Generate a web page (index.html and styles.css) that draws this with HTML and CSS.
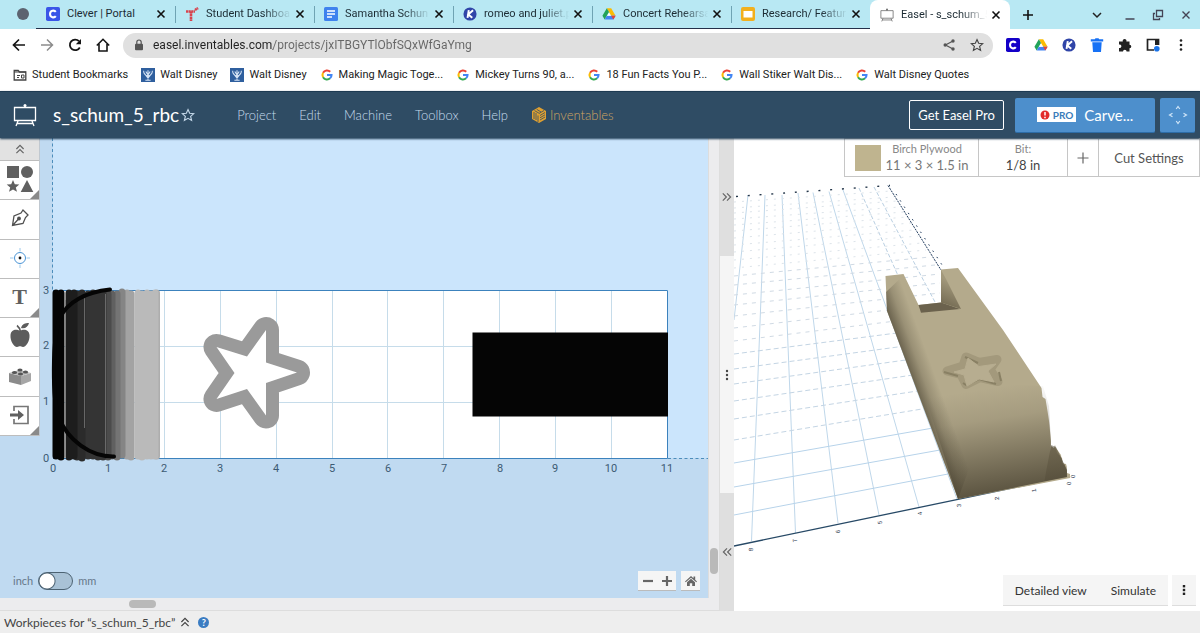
FILE: index.html
```html
<!DOCTYPE html>
<html lang="en">
<head>
<meta charset="utf-8">
<title>Easel - s_schum_5_rbc</title>
<link rel="stylesheet" href="styles.css">
</head>
<body>
<svg class="defs" aria-hidden="true">
  <symbol id="x" viewBox="0 0 10 10"><path d="M1.5 1.5l7 7M8.5 1.5l-7 7" stroke="currentColor" stroke-width="1.6"/></symbol>
  <symbol id="drive" viewBox="0 0 16 16"><path d="M5.500 1.500h5l5 8.500h-5z" fill="#fbbc04"/><path d="M5.500 1.500L.5 10 3 14.300 8 5.800z" fill="#22a35a"/><path d="M3 14.300h10l2.500-4.300h-10z" fill="#4285f4"/><path d="M13 14.300l2.500-4.300h-5z" fill="#ea4335"/><path d="M8 6.500L5.800 10h4.400z" fill="#fff"/></symbol>
  <symbol id="kami" viewBox="0 0 16 16"><circle cx="8" cy="8" r="7.5" fill="#3045a8"/><path d="M6.6 3.5L5.2 12.5M11.5 3.8L6 8.6l4.6 3.8" stroke="#fff" stroke-width="2.2" fill="none"/></symbol>
  <symbol id="clever" viewBox="0 0 16 16"><rect width="16" height="16" rx="2" fill="currentColor"/><path d="M11.2 5.6C9.5 3.2 4.6 3.8 4.6 8s4.9 4.800 6.600 2.400" fill="none" stroke="#fff" stroke-width="2.300"/></symbol>
  <symbol id="google" viewBox="0 0 16 16"><g fill="none" stroke-width="2.300"><path d="M3.500 5.500A5.200 5.200 0 0 1 11.700 4.300" stroke="#ea4335"/><path d="M3.500 10.500A5.200 5.200 0 0 1 3.500 5.500" stroke="#fbbc04"/><path d="M11.500 11.800A5.200 5.200 0 0 1 3.500 10.500" stroke="#34a853"/><path d="M8 8h5.200a5.200 5.200 0 0 1-1.700 3.800" stroke="#4285f4"/></g></symbol>
  <symbol id="disney" viewBox="0 0 16 16"><rect width="16" height="16" fill="#2f5f9e"/><path d="M3 3q0 5 5 6 5-1 5-6M8 2.500V14M5.500 4l2.500 4 2.500-4M5 14h6M4 6.500l4 5 4-5" fill="none" stroke="#d6e4f5" stroke-width="1.200"/></symbol>
  <symbol id="easel" viewBox="0 0 24 24"><path d="M1.500 4.500h21v13h-21zM12 4.500V2M5 18l-2 5M19 18l2 5M4 20.500h16" fill="none" stroke="currentColor" stroke-width="1.300"/><circle cx="12" cy="2.500" r="1.500" fill="currentColor"/></symbol>
  <symbol id="star" viewBox="0 0 16 16"><path d="M8 1.800l1.900 4.300 4.600.4-3.500 3.100 1.100 4.600L8 11.800l-4.100 2.400L5 9.600 1.500 6.500l4.600-.4z" fill="none" stroke="currentColor" stroke-width="1.300"/></symbol>
  <symbol id="chev" viewBox="0 0 10 10"><path d="M2 5l3-3 3 3M2 8.500l3-3 3 3" fill="none" stroke="currentColor" stroke-width="1"/></symbol>
</svg>

<div class="tabstrip">
  <span class="tab-dot"></span>
  <div class="tabs">
    <div class="tab"><svg class="i14 clever-tab"><use href="#clever"/></svg><span class="tab-name">Clever | Portal</span><button class="close" aria-label="Close tab"><svg class="i10"><use href="#x"/></svg></button></div>
    <div class="tab"><svg class="i14" viewBox="0 0 14 14"><path d="M1 4.500h9M6 4.500V14M10 3l3-2" stroke="#d8434e" stroke-width="2.600" stroke-dasharray="2.200 .4" fill="none"/></svg><span class="tab-name fade">Student Dashboa</span><button class="close" aria-label="Close tab"><svg class="i10"><use href="#x"/></svg></button></div>
    <div class="tab"><svg class="i14" viewBox="0 0 14 14"><rect width="14" height="14" rx="1.500" fill="#3f82ee"/><path d="M3 4h8M3 7h8M3 10h5" stroke="#fff" stroke-width="1.400"/></svg><span class="tab-name fade">Samantha Schun</span><button class="close" aria-label="Close tab"><svg class="i10"><use href="#x"/></svg></button></div>
    <div class="tab"><svg class="i14"><use href="#kami"/></svg><span class="tab-name fade">romeo and juliet.p</span><button class="close" aria-label="Close tab"><svg class="i10"><use href="#x"/></svg></button></div>
    <div class="tab"><svg class="i14"><use href="#drive"/></svg><span class="tab-name fade">Concert Rehearsa</span><button class="close" aria-label="Close tab"><svg class="i10"><use href="#x"/></svg></button></div>
    <div class="tab"><svg class="i14" viewBox="0 0 14 14"><rect width="14" height="14" rx="2" fill="#f2b01e"/><rect x="2.500" y="4" width="9" height="6.500" fill="#fff"/></svg><span class="tab-name fade">Research/ Featur</span><button class="close" aria-label="Close tab"><svg class="i10"><use href="#x"/></svg></button></div>
  </div>
  <div class="tab tab-active"><svg class="i14 easel-tab"><use href="#easel"/></svg><span class="tab-name fade">Easel - s_schum_5</span><button class="close" aria-label="Close tab"><svg class="i10"><use href="#x"/></svg></button></div>
  <button class="new-tab" aria-label="New tab"><svg class="i12" viewBox="0 0 12 12"><path d="M6 1v10M1 6h10" stroke="#111" stroke-width="1.600"/></svg></button>
  <div class="window-controls">
    <button aria-label="Search tabs"><svg class="i12" viewBox="0 0 12 12"><path d="M2 4l4 4 4-4" fill="none" stroke="#222" stroke-width="1.500"/></svg></button>
    <button aria-label="Minimize"><svg class="i12" viewBox="0 0 12 12"><path d="M1.500 10h9" stroke="#445" stroke-width="1.500"/></svg></button>
    <button aria-label="Restore"><svg class="i12" viewBox="0 0 12 12"><path d="M4.500 1.500h6v6h-6zM3 4.500H1.500v6h6V9" fill="none" stroke="#445" stroke-width="1.300"/></svg></button>
    <button aria-label="Close"><svg class="i12" viewBox="0 0 12 12"><path d="M2.500 2.500l7 7M9.500 2.500l-7 7" stroke="#445" stroke-width="1.400"/></svg></button>
  </div>
</div>

<div class="navbar">
  <div class="nav-buttons">
    <button aria-label="Back"><svg class="i14" viewBox="0 0 14 14"><path d="M13 7H2M7 1.500L1.500 7 7 12.500" fill="none" stroke="#151515" stroke-width="1.700"/></svg></button>
    <button aria-label="Forward"><svg class="i14" viewBox="0 0 14 14"><path d="M1 7h11M7 1.500L12.500 7 7 12.500" fill="none" stroke="#8c8c8c" stroke-width="1.500"/></svg></button>
    <button aria-label="Reload"><svg class="i14" viewBox="0 0 14 14"><path d="M11.800 9.500A5.300 5.300 0 1 1 11 3.200" fill="none" stroke="#151515" stroke-width="1.800"/><path d="M13 1v5.200H7.800z" fill="#151515"/></svg></button>
    <button aria-label="Home"><svg class="i14" viewBox="0 0 14 14"><path d="M.8 7.500L7 1.300l6.200 6.200M3 6v7h8V6" fill="none" stroke="#151515" stroke-width="1.600"/></svg></button>
  </div>
  <div class="omnibox">
    <svg class="i12" viewBox="0 0 12 12"><rect x="2" y="4.800" width="8" height="6.400" rx="1" fill="#555"/><path d="M3.800 5V3.200a2.200 2.200 0 0 1 4.400 0V5" fill="none" stroke="#555" stroke-width="1.200"/></svg>
    <input class="url" aria-label="Address" value="easel.inventables.com/projects/jxITBGYTlObfSQxWfGaYmg">
    <button aria-label="Share"><svg class="i14" viewBox="0 0 14 14"><path d="M11 3L3.500 7l7.500 4" fill="none" stroke="#555" stroke-width="1.200"/><circle cx="11" cy="3" r="1.700" fill="#555"/><circle cx="3.200" cy="7" r="1.700" fill="#555"/><circle cx="11" cy="11" r="1.700" fill="#555"/></svg></button>
    <button class="bookmark-star" aria-label="Bookmark"><svg class="i14"><use href="#star"/></svg></button>
  </div>
  <div class="extensions">
    <button aria-label="Clever"><svg class="i14 clever-ext"><use href="#clever"/></svg></button>
    <button aria-label="Drive"><svg class="i14"><use href="#drive"/></svg></button>
    <button aria-label="Kami"><svg class="i14"><use href="#kami"/></svg></button>
    <button aria-label="Clear"><svg class="i14" viewBox="0 0 14 14"><path d="M.8 1.200h4L5.500.3h3l.7.9h4v2.300H.800zM2.300 4.300h9.400L11 14H3z" fill="#1671f5"/></svg></button>
    <button aria-label="Extensions"><svg class="i14" viewBox="0 0 14 14"><path d="M1 3.500h3.800a1.900 1.900 0 1 1 3.600 0h3.100v3.200a1.800 1.800 0 1 1 0 3.600v3.200H8.600a1.800 1.800 0 1 0-3.600 0H1V9.900a1.800 1.800 0 1 0 0-3.400z" fill="#222"/></svg></button>
    <button aria-label="Side panel"><svg class="i14" viewBox="0 0 14 14"><path d="M8 12H1.500V1.500h11V7" fill="none" stroke="#222" stroke-width="1.700"/><path d="M9 1h4v6H9z" fill="#222"/><circle cx="10.800" cy="10.800" r="2.800" fill="#1a73e8"/></svg></button>
    <button aria-label="Menu"><svg class="i14" viewBox="0 0 14 14"><g fill="#222"><circle cx="7" cy="2.500" r="1.300"/><circle cx="7" cy="7" r="1.300"/><circle cx="7" cy="11.500" r="1.300"/></g></svg></button>
  </div>
</div>

<nav class="bookmarks">
  <a href="#"><svg class="i14" viewBox="0 0 14 14"><path d="M1.200 2.500h4L6.500 4h6.300v8H1.200z" fill="none" stroke="#444" stroke-width="1.300"/><path d="M1 4h12M4 7.500h3M4 9.500h2M8.500 7h2.500v3H8.500z" stroke="#444" fill="none"/></svg><span>Student Bookmarks</span></a>
  <a href="#"><svg class="i14"><use href="#disney"/></svg><span>Walt Disney</span></a>
  <a href="#"><svg class="i14"><use href="#disney"/></svg><span>Walt Disney</span></a>
  <a href="#"><svg class="i14"><use href="#google"/></svg><span>Making Magic Toge...</span></a>
  <a href="#"><svg class="i14"><use href="#google"/></svg><span>Mickey Turns 90, a...</span></a>
  <a href="#"><svg class="i14"><use href="#google"/></svg><span>18 Fun Facts You P...</span></a>
  <a href="#"><svg class="i14"><use href="#google"/></svg><span>Wall Stiker Walt Dis...</span></a>
  <a href="#"><svg class="i14"><use href="#google"/></svg><span>Walt Disney Quotes</span></a>
</nav>

<header class="app-header">
  <svg class="logo"><use href="#easel"/></svg>
  <h1 class="project-name">s_schum_5_rbc</h1>
  <button class="favorite" aria-label="Favorite"><svg class="i14"><use href="#star"/></svg></button>
  <nav class="menu">
    <a href="#">Project</a><a href="#">Edit</a><a href="#">Machine</a><a href="#">Toolbox</a><a href="#">Help</a>
    <a class="brand" href="#"><svg class="i16" viewBox="0 0 16 16"><path d="M8 0l7 4v8l-7 4-7-4V4z" fill="#e0a030"/><path d="M3 5v7M5 6v7M7 8.500V15M9 8.500l5-3M9 10.800l5-3M9 13l5-3M3.500 3.600L8 6.200M5.700 2.300L10 5M8 6.500l5-3" stroke="#2f4c64" stroke-width=".8"/></svg>Inventables</a>
  </nav>
  <div class="header-actions">
    <button class="get-pro">Get Easel Pro</button>
    <button class="carve"><span class="pro"><svg class="i10" viewBox="0 0 10 10"><circle cx="5" cy="5" r="4.500" fill="#e22b2b"/><path d="M5 2v3.600M5 6.800v1.400" stroke="#fff" stroke-width="1.500"/></svg>PRO</span>Carve...</button>
    <button class="jog" aria-label="Jog machine"><svg class="i20" viewBox="0 0 20 20"><path d="M8.200 4L10 1.500 11.800 4M8.200 16l1.800 2.500 1.800-2.500M4.500 8.200L1.500 10l3 1.800M15.500 8.200l3 1.800-3 1.800" fill="none" stroke="#cfe5f8" stroke-width="1.200"/></svg></button>
  </div>
</header>

<main class="workspace">
  <section class="editor">
    <div class="canvas">
      <svg class="drawing" viewBox="0 138 708 460" preserveAspectRatio="xMinYMin slice">
        <rect x="0" y="138" width="1400" height="900" fill="#c0daf1"/>
        <rect x="53" y="138" width="1400" height="320" fill="#cbe5fc"/>
        <rect x="53" y="290" width="615" height="168" fill="#fff"/>
        <path d="M164.500 291v167M220.500 291v167M276.500 291v167M332.500 291v167M387.500 291v167M443.500 291v167M499.500 291v167M555.500 291v167M611.500 291v167M53 346.500h615M53 402.500h615" stroke="#c6dcea" fill="none"/>
        <path d="M52.500 138v152M668 458.500h40" stroke="#4c8dbb" stroke-dasharray="3 2.500" fill="none"/>
        <path d="M53 290.500h614.500v168H53" stroke="#3c82bd" fill="none"/>
        <g fill="none" stroke-width="7" stroke-linecap="round">
          <path d="M156.500 293v163" stroke="#adadad"/>
          <path d="M138 293v163M142 294v163M147 293v163M151 294v162M155 293v163" stroke="#bababa"/>
          <path d="M127 293v163M131 294v163" stroke="#a3a3a3"/>
          <path d="M122 292v163" stroke="#858585"/>
          <path d="M117 294v163" stroke="#747474"/>
          <path d="M112 294v162" stroke="#606060"/>
          <path d="M108 294v163" stroke="#4b4b4b"/>
          <path d="M88 294v162M93 293v163M98 294v163M103 293v164" stroke="#343434"/>
          <path d="M82 293v165M77 294v163" stroke="#2b2b2b"/>
          <path d="M69 293v164M74 293v163" stroke="#1d1d1d"/>
          <path d="M56 293v163M61 293v164" stroke="#050505"/>
        </g>
        <path d="M65.500 300v130M84.500 294v134M105.500 294v160" stroke="#777" stroke-width=".8"/>
        <path d="M110 289.500C86 292 67 302 60 318 52 338 52 400 59 418 68 440 90 457 114 456.500" fill="none" stroke="#050505" stroke-width="4" stroke-linecap="round"/>
        <path d="M297 372.500L266 383v32.500L247 389l-30.500 10 18-26-18-26L247 356.500l19-26.500v32.500z" fill="#fff" stroke="#9a9a9a" stroke-width="26" stroke-linejoin="round"/>
        <path d="M297 372.500L266 383v32.500L247 389l-30.500 10 18-26-18-26L247 356.500l19-26.500v32.500z" fill="#fff"/>
        <rect x="472.500" y="332.500" width="195.500" height="84" fill="#050505"/>
        <g class="ruler" text-anchor="middle">
          <text x="53" y="472">0</text><text x="108" y="472">1</text><text x="164" y="472">2</text><text x="220" y="472">3</text><text x="276" y="472">4</text><text x="332" y="472">5</text><text x="388" y="472">6</text><text x="444" y="472">7</text><text x="500" y="472">8</text><text x="555" y="472">9</text><text x="611" y="472">10</text><text x="667" y="472">11</text>
          <text x="46" y="294">3</text><text x="46" y="349">2</text><text x="46" y="405">1</text><text x="46" y="462">0</text>
        </g>
      </svg>
      <div class="rail">
        <button class="rail-collapse" aria-label="Collapse tools"><svg class="i12"><use href="#chev"/></svg></button>
        <button class="tool more" aria-label="Shapes"><svg class="i26" viewBox="0 0 26 26"><g fill="#606060"><path d="M0 0h12v12H0zM20 14l6.300 12H13.700zM6 14l1.800 4.200 4.500.3-3.500 2.900 1.200 4.400L6 23.400l-4 2.400 1.200-4.400-3.500-2.900 4.500-.3z"/><circle cx="20" cy="6" r="6"/></g></svg></button>
        <button class="tool" aria-label="Pen"><svg class="i20" viewBox="0 0 20 20"><path d="M2.500 17.500L4 8l7-3 2-3 5 5-2.500 2.500L13 15.500zM3 17l5.500-6" fill="none" stroke="#505050" stroke-width="1.300"/><circle cx="9" cy="10.500" r="1.900" fill="#505050"/></svg></button>
        <button class="tool" aria-label="Drill"><svg class="i20" viewBox="0 0 20 20"><circle cx="10" cy="10" r="5.500" fill="none" stroke="#4b95d6"/><path d="M10 0v3.500M10 16.500V20M0 10h3.500M16.500 10H20" stroke="#9cc8ea"/><circle cx="10" cy="10" r="1.400" fill="#111"/></svg></button>
        <button class="tool more letter">T</button>
        <button class="tool" aria-label="Icons"><svg class="i26" viewBox="0 0 26 26"><path d="M13 8c3-2 9-2 9.500 4S19 24 16 24c-1.500 0-2-.7-3-.7s-1.500.7-3 .7c-3 0-7-6-6.500-12S10 6 13 8z" fill="#5c5c5c"/><path d="M14 5c1-4 4-5 8-5-1 4-4 6-8 5z" fill="#5c5c5c"/><path d="M13.500 9C13 6 12 4 10 2.500" fill="none" stroke="#5c5c5c" stroke-width="1.600"/></svg></button>
        <button class="tool" aria-label="Apps"><svg class="i22" viewBox="0 0 22 22"><path d="M0 8l12 3v9L0 17z" fill="#8b8b8b"/><path d="M12 11l10-3v8l-10 4z" fill="#a6a6a6"/><path d="M0 8l10-3 12 3-10 3z" fill="#bcbcbc"/><g fill="#555"><ellipse cx="5.500" cy="7.500" rx="2.600" ry="1.500"/><ellipse cx="11" cy="5" rx="2.600" ry="1.500"/><ellipse cx="11.500" cy="9" rx="2.600" ry="1.500"/><ellipse cx="16.500" cy="7" rx="2.600" ry="1.500"/></g></svg></button>
        <button class="tool more" aria-label="Import"><svg class="i20" viewBox="0 0 20 20"><path d="M4 6V1.500h14v17H4V14" fill="none" stroke="#777" stroke-width="1.700"/><path d="M0 8.500h8V5l6 5-6 5v-3.500H0z" fill="#606060"/></svg></button>
      </div>
      <div class="units"><label for="unit">inch</label><input id="unit" class="switch" type="checkbox"><label for="unit">mm</label></div>
      <div class="zoom">
        <div class="zoom-pair"><button aria-label="Zoom out"><svg class="i10" viewBox="0 0 10 10"><path d="M0 5h10" stroke="#666" stroke-width="2.200"/></svg></button><button aria-label="Zoom in"><svg class="i10" viewBox="0 0 10 10"><path d="M0 5h10M5 0v10" stroke="#666" stroke-width="2.200"/></svg></button></div>
        <button class="zoom-home" aria-label="Reset view"><svg class="i12" viewBox="0 0 12 12"><path d="M0 6.500L6 1l2.500 2.200V1.500h1.700v3.300L12 6.500l-.7.8L6 2.700.7 7.300zM2 7.300l4-3.500 4 3.500V11H7.200V8.200H4.800V11H2z" fill="#666"/></svg></button>
      </div>
    </div>
    <div class="vscroll"><span class="vthumb"></span></div>
    <div class="hscroll"><span class="hthumb"></span></div>
  </section>

  <div class="splitter">
    <button class="split-end" aria-label="Expand editor"><svg class="i12 right"><use href="#chev"/></svg></button>
    <div class="split-grip"><svg class="i12" viewBox="0 0 12 12"><g fill="#444"><circle cx="6" cy="2" r="1.200"/><circle cx="6" cy="6" r="1.200"/><circle cx="6" cy="10" r="1.200"/></g></svg></div>
    <button class="split-end" aria-label="Expand preview"><svg class="i12 left"><use href="#chev"/></svg></button>
  </div>

  <section class="preview">
    <svg class="drawing" viewBox="734 138 466 473" preserveAspectRatio="xMinYMin slice">
      <defs>
        <linearGradient id="front" x1="990" y1="388" x2="1006" y2="490" gradientUnits="userSpaceOnUse"><stop offset="0" stop-color="#4a4332" stop-opacity="0"/><stop offset=".3" stop-color="#4a4332" stop-opacity=".14"/><stop offset="1" stop-color="#4a4332" stop-opacity=".82"/></linearGradient>
        <linearGradient id="side" x1="921" y1="405" x2="943" y2="397" gradientUnits="userSpaceOnUse"><stop offset="0" stop-color="#4a4332" stop-opacity=".7"/><stop offset=".5" stop-color="#4a4332" stop-opacity=".25"/><stop offset="1" stop-color="#4a4332" stop-opacity="0"/></linearGradient>
        <linearGradient id="wall" x1="941" y1="306" x2="952" y2="282" gradientUnits="userSpaceOnUse"><stop offset="0" stop-color="#716850"/><stop offset="1" stop-color="#a2987b"/></linearGradient>
      </defs>
      <g fill="none">
        <path d="M748 195L734 320M765 195L751.500 541M782 195L795.500 533M798 193L838 523M813 192.500L879 515M829 191.500L919 507M843 190L957 499" stroke="#bfd7ea"/>
        <path d="M859 188L900 280M874 187L935 302" stroke="#b9cfe2" stroke-dasharray="4 2"/>
        <path d="M734 515L948 474M734 487L940 450M734 463L933 428" stroke="#b7d3ea"/>
        <path d="M734 440L928 408M734 419L924 390M734 401L920 374M734 384L920 358M734 369L920 344M734 354L920 330" stroke="#c4d5e4" stroke-dasharray="5 3"/>
        <path d="M734 341L920 318M734 328L940 304M734 316L940 293M734 305L940 283M734 295L940 274M734 285L935 265M734 276L930 257" stroke="#d0dae4" stroke-dasharray="4 5"/>
        <path d="M734 268L926 250M734 260L922 243M734 252L918 236M734 245L914 230M734 238L911 223M734 231L907 217M734 225L904 212M734 219L900 207M734 213L897 201M734 208L894 197M734 202L891 191" stroke="#dde4ea" stroke-dasharray="2 6"/>
        <path d="M736 196.500L890 185.500" stroke="#25374b" stroke-width="1.400" stroke-dasharray="2 9.800"/>
        <path d="M888 185.500L941 270" stroke="#1f3a5c" stroke-dasharray="2 1"/>
        <path d="M896 194L944 268" stroke="#1f3a5c" stroke-dasharray="1.500 6"/>
        <path d="M734 546L1068 476.500" stroke="#274966" stroke-width="1.300"/>
      </g>
      <path d="M885.500 276l18-2 15 31 22.500-2.500v-33l17-1.500 45 62 38.500 58 1 9 3 2 2 12 1.500 10 2 20-1 25 6-18 5 7 1 8 4 1 1 9 3 1v4L958 499 887 311z" fill="#b4aa8c"/>
      <path d="M1046 472l5-26 3 2 1-3 2 8 5 5 1 7 2-1 .5 6 1-6v13l-22 4z" fill="#958b6f"/>
      <path d="M918.500 305l22.500-2.500 19 6.500-39 3.700z" fill="#6b624d"/>
      <path d="M941 270v32.500l20 6.500-15-30z" fill="url(#wall)"/>
      <path d="M925 396l20-14 98 4 6 20 2 39 5 2 11 23v7L958 499z" fill="url(#front)"/>
      <path d="M886 292l1 19 71 188 16-44-70-180z" fill="url(#side)"/>
      <g stroke-linejoin="round">
        <path d="M947 371l16-5 3-9 13 5.500 18-3-7 10 8 12-18-4-14 7-5-10z" fill="#a3997c" stroke="#a3997c" stroke-width="9"/>
        <path d="M965 357l13 6M963 383l3 2 13-6 17 5M999 372l2 9M944 372l14 4" fill="none" stroke="#898064" stroke-width="2"/>
        <path d="M954 372l11-3 3-11 11 8.500 17-2.500-8 7 6 11-15-3-12 7-3-11z" fill="#b7ad90" stroke="#b7ad90"/>
      </g>
      <g class="axis-labels" text-anchor="middle">
        <text transform="translate(753 549) rotate(-100)">8</text><text transform="translate(797 540) rotate(-100)">7</text><text transform="translate(840 531) rotate(-100)">6</text><text transform="translate(882 522) rotate(-100)">5</text><text transform="translate(922 513) rotate(-100)">4</text><text transform="translate(961 505) rotate(-100)">3</text><text transform="translate(999 498) rotate(-100)">2</text><text transform="translate(1036 490) rotate(-100)">1</text><text transform="translate(1071 483) rotate(-100)">0</text><text transform="translate(1075 476) rotate(-100)">0</text>
      </g>
    </svg>
    <div class="settings">
      <button class="material"><span class="swatch"></span><span class="pair"><span class="small">Birch Plywood</span><span class="value">11 × 3 × 1.5 in</span></span></button>
      <button class="bit"><span class="pair"><span class="small">Bit:</span><span class="value dark">1/8 in</span></span></button>
      <button class="add-bit" aria-label="Add bit"><svg class="i12" viewBox="0 0 12 12"><path d="M6 .5v11M.5 6h11" stroke="#666" stroke-width="1.200"/></svg></button>
      <button class="cut">Cut Settings</button>
    </div>
    <div class="view-actions">
      <div class="view-pair"><button>Detailed view</button><button>Simulate</button></div>
      <button class="kebab" aria-label="More"><svg class="i12" viewBox="0 0 12 12"><g fill="#222"><rect x="4.800" y="1" width="2.400" height="2.400"/><rect x="4.800" y="4.800" width="2.400" height="2.400"/><rect x="4.800" y="8.600" width="2.400" height="2.400"/></g></svg></button>
    </div>
  </section>
</main>

<footer class="workpieces">
  <button class="workpieces-toggle">Workpieces for “s_schum_5_rbc” <svg class="i12"><use href="#chev"/></svg></button>
  <button class="help" aria-label="Help">?</button>
</footer>
</body>
</html>
```

FILE: styles.css
```css
* { box-sizing: border-box; }

body {
  margin: 0;
  height: 100vh;
  display: flex;
  flex-direction: column;
  overflow: hidden;
  font-family: Lato, "Liberation Sans", sans-serif;
  background: #fff;
  color: #444;
}

button {
  margin: 0;
  padding: 0;
  border: 0;
  background: none;
  color: inherit;
  font: inherit;
  display: flex;
  align-items: center;
  justify-content: center;
}

a { color: inherit; text-decoration: none; }
svg { display: block; flex: none; }

.defs { position: absolute; width: 0; height: 0; }
.i10 { width: 10px; height: 10px; }
.i12 { width: 12px; height: 12px; }
.i14 { width: 14px; height: 14px; }
.i16 { width: 16px; height: 16px; }
.i20 { width: 20px; height: 20px; }
.i22 { width: 22px; height: 22px; }
.i26 { width: 26px; height: 26px; overflow: visible; }

/* Browser tabs */
.tabstrip {
  flex: none;
  display: flex;
  height: 29px;
  background: #b8e8f3;
  font: 11px/16px Roboto, sans-serif;
  color: #1c2b33;
}
.tab-dot {
  width: 12px;
  height: 12px;
  margin: 8px 7px 0 17px;
  border-radius: 50%;
  background: #5c6370;
}
.tabs {
  display: flex;
  border-bottom: 1px solid #23304a;
}
.tab {
  position: relative;
  display: flex;
  align-items: center;
  width: 139px;
  padding: 0 9px 0 10px;
}
.tabs .tab + .tab::before {
  content: "";
  position: absolute;
  left: 0;
  top: 6px;
  height: 17px;
  border-left: 1px solid #6fa3b3;
}
.tab-name {
  flex: 1;
  min-width: 0;
  margin: 0 0 0 7px;
  white-space: nowrap;
}
.fade { mask-image: linear-gradient(to right, #000 66%, transparent 96%); }
.tab-active {
  width: 140px;
  border-radius: 8px 8px 0 0;
  background: #fff;
}
.close { color: #111; }
.clever-tab { color: #3a55e8; }
.clever-ext { color: #1400c8; }
.easel-tab { color: #666; }
.new-tab { width: 36px; }
.window-controls {
  display: flex;
  gap: 16px;
  margin-left: auto;
  padding-right: 8px;
}
.window-controls button:first-child { margin-right: 5px; }

/* Browser toolbar */
.navbar {
  flex: none;
  display: flex;
  align-items: center;
  height: 32px;
}
.nav-buttons { display: flex; gap: 14px; padding: 0 13px 0 12px; }
.omnibox {
  flex: 1;
  display: flex;
  align-items: center;
  height: 25px;
  padding: 0 9px 0 10px;
  border-radius: 13px;
  background: #e0e0e0;
}
.url {
  flex: 1;
  min-width: 0;
  margin-left: 8px;
  padding: 0;
  border: 0;
  outline: 0;
  font: 12px/20px Roboto, sans-serif;
  color: transparent;
  background: linear-gradient(to right, #222 120px, #666 120px);
  background-clip: text;
}
.bookmark-star { margin-left: 14px; color: #444; }
.extensions { display: flex; gap: 14px; padding: 0 12px 0 13px; }

.bookmarks {
  flex: none;
  display: flex;
  align-items: center;
  gap: 13px;
  height: 29px;
  padding: 0 13px 2px;
  font: 11px/16px Roboto, sans-serif;
  color: #222;
}
.bookmarks a { display: flex; align-items: center; gap: 5px; white-space: nowrap; }

/* Application header */
.app-header {
  flex: none;
  position: relative;
  z-index: 2;
  display: flex;
  align-items: center;
  height: 47px;
  margin-top: 1px;
  padding: 0 5px 0 13px;
  background: #2f4c64;
  border-top: 1px solid #1d3a52;
  box-shadow: 0 1px 2px #1d3a52;
  color: #fff;
}
.logo { width: 24px; height: 24px; }
.project-name { margin: 0 2px 0 16px; font-size: 19px; line-height: 24px; font-weight: 400; }
.favorite { color: #c3d7e8; }
.menu {
  display: flex;
  gap: 23px;
  margin-left: 42px;
  font-size: 13px;
  line-height: 20px;
  font-weight: 300;
  color: #c6dcee;
}
.brand { display: flex; align-items: center; gap: 3px; color: #cfa562; }
.header-actions { display: flex; align-items: center; margin-left: auto; }
.get-pro {
  width: 95px;
  height: 30px;
  margin-right: 11px;
  border: 1px solid #fff;
  border-radius: 2px;
  font-size: 13px;
}
.carve, .jog {
  height: 35px;
  border-radius: 2px;
  background: #4d8fcc;
  border-bottom: 1px solid #2d6da8;
}
.carve { width: 140px; gap: 8px; margin-right: 5px; font-size: 15px; }
.jog { width: 35px; }
.pro {
  display: flex;
  align-items: center;
  gap: 3px;
  height: 15px;
  padding: 0 3px;
  background: #fff;
  color: #3a7cba;
  font-size: 10px;
  font-weight: 700;
}

/* Workspace */
.workspace { flex: 1; min-height: 0; display: flex; }
.editor {
  flex: 719 1 0;
  min-width: 0;
  display: grid;
  grid-template-columns: minmax(0, 1fr) 11px;
  grid-template-rows: minmax(0, 1fr) 13px;
  background: #ececee;
}
.canvas { position: relative; overflow: hidden; }
.drawing { width: 100%; height: 100%; }
.ruler { font: 11px Roboto, sans-serif; fill: #3d5a73; }

.rail {
  position: absolute;
  left: 0;
  top: 0;
  width: 40px;
  height: 298px;
  display: flex;
  flex-direction: column;
  background: #fff;
  border-right: 1px solid #c0c8d0;
}
.rail-collapse { height: 22px; background: #e2e2e2; color: #666; }
.tool {
  flex: 1;
  position: relative;
  padding-bottom: 2px;
  border-top: 1px solid #bdbdbd;
}
.tool:last-child { border-bottom: 1px solid #bdbdbd; }
.more::after {
  content: "";
  position: absolute;
  right: 0;
  bottom: 0;
  border-left: 9px solid transparent;
  border-bottom: 9px solid #8a8a8a;
}
.letter { font: 700 22px/24px "Liberation Serif", serif; color: #606060; }

.units {
  position: absolute;
  left: 13px;
  bottom: 8px;
  display: flex;
  align-items: center;
  gap: 5px;
  font-size: 11px;
  line-height: 16px;
  color: #66788a;
}
.switch {
  appearance: none;
  width: 35px;
  height: 18px;
  margin: 0;
  border: 1px solid #4c6272;
  border-radius: 9px;
  background: radial-gradient(circle at 8px 8px, #fff 7px, #4c6272 8px, #a9c2d6 9px);
}
.zoom { position: absolute; right: 8px; bottom: 7px; display: flex; gap: 5px; }
.zoom-pair { display: flex; }
.zoom button { width: 19px; height: 20px; background: #f5f5f5; border-bottom: 1px solid #bbb; }

.vscroll { display: flex; align-items: flex-end; justify-content: center; border-left: 1px solid #ddd; padding-bottom: 24px; }
.vthumb { width: 8px; height: 26px; border-radius: 4px; background: #b9b9b9; }
.hscroll { grid-column: 1 / -1; display: flex; align-items: center; padding-left: 18%; border-bottom: 1px solid #ddd; }
.hthumb { width: 27px; height: 8px; border-radius: 4px; background: #b9b9b9; }

.splitter { flex: none; display: flex; flex-direction: column; width: 15px; border-left: 1px solid #ddd; }
.split-end { flex: 118 1 0; background: #dfdfdf; color: #666; }
.split-grip { flex: 236 1 0; display: flex; align-items: center; justify-content: center; background: #f5f5f5; }
.right { transform: rotate(90deg); }
.left { transform: rotate(-90deg); }

.preview { position: relative; flex: 466 1 0; min-width: 0; overflow: hidden; background: #fff; }
.axis-labels { font: 6px "Liberation Sans", sans-serif; fill: #1c3146; }
.settings {
  position: absolute;
  top: 0;
  right: 0;
  display: flex;
  height: 39px;
  border: 1px solid #c6c6c6;
  background: #fff;
  color: #555;
}
.settings > button + button { border-left: 1px solid #c6c6c6; }
.material { width: 133px; gap: 5px; }
.bit { width: 89px; }
.add-bit { width: 31px; }
.cut { width: 101px; font-size: 13px; }
.swatch { width: 26px; height: 26px; background: #bfb48f; }
.pair { display: flex; flex-direction: column; align-items: center; padding-bottom: 2px; }
.small { font-size: 11px; line-height: 16px; color: #888; }
.value { font-size: 13px; line-height: 16px; color: #777; white-space: nowrap; }
.dark { color: #444; }

.view-actions {
  position: absolute;
  right: 4px;
  bottom: 5px;
  display: flex;
  gap: 4px;
  font-size: 12px;
  color: #333;
}
.view-pair { display: flex; }
.view-actions button { height: 31px; padding: 0 12px; background: #f5f5f5; border-bottom: 1px solid #ddd; }
.view-actions .kebab { width: 24px; padding: 0; }

.workpieces {
  flex: none;
  display: flex;
  align-items: center;
  gap: 7px;
  height: 22px;
  padding: 0 4px;
  background: #eee;
  font-size: 12px;
  color: #444;
}
.workpieces-toggle { gap: 4px; }
.help {
  width: 11px;
  height: 11px;
  border-radius: 50%;
  background: #3a7cc2;
  color: #fff;
  font-size: 9px;
  font-weight: 700;
}
```
